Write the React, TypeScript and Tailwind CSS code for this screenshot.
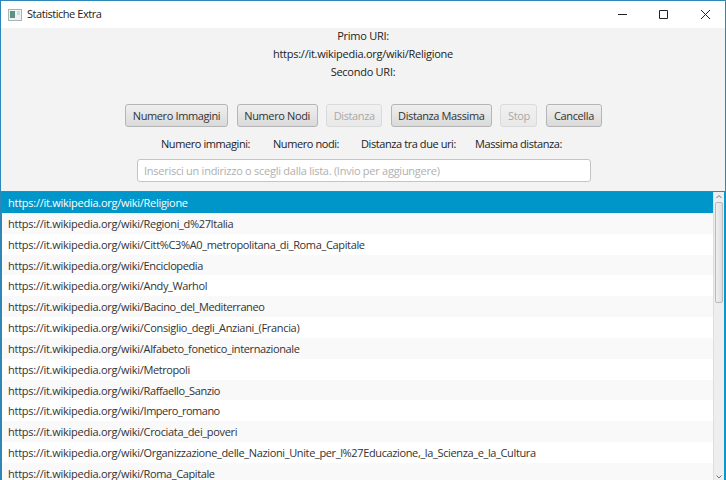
import React from "react";

const rows: [string, string][] = [
  ["Religione", "tracking-[-0.3px]"],
  ["Regioni_d%27Italia", "tracking-[-0.34px]"],
  ["Citt%C3%A0_metropolitana_di_Roma_Capitale", "tracking-[-0.35px]"],
  ["Enciclopedia", "tracking-[-0.4px]"],
  ["Andy_Warhol", "tracking-[-0.38px]"],
  ["Bacino_del_Mediterraneo", "tracking-[-0.41px]"],
  ["Consiglio_degli_Anziani_(Francia)", "tracking-[-0.32px]"],
  ["Alfabeto_fonetico_internazionale", "tracking-[-0.37px]"],
  ["Metropoli", "tracking-[-0.43px]"],
  ["Raffaello_Sanzio", "tracking-[-0.41px]"],
  ["Impero_romano", "tracking-[-0.52px]"],
  ["Crociata_dei_poveri", "tracking-[-0.33px]"],
  ["Organizzazione_delle_Nazioni_Unite_per_l%27Educazione,_la_Scienza_e_la_Cultura", "tracking-[-0.365px]"],
  ["Roma_Capitale", "tracking-[-0.39px]"],
];

function Button({ label, width, disabled }: { label: string; width: string; disabled?: boolean }) {
  return (
    <button
      disabled={disabled}
      className={`${width} h-[23px] shrink-0 whitespace-nowrap rounded-[3px] border border-[#b5b5b5] bg-linear-to-b from-[#efefef] to-[#dadada] text-center leading-[21px] text-[#333] disabled:opacity-40`}
    >
      {label}
    </button>
  );
}

export default function App() {
  return (
    <div className="flex h-[480px] w-[726px] flex-col overflow-hidden border-x border-t border-[#2d86b5] bg-[#f3f3f3] font-['Open_Sans','Noto_Sans',sans-serif] text-[11px] tracking-[-0.26px] text-[#222]">
      <header className="flex h-[27px] shrink-0 items-center bg-white pl-[7px]">
        <svg width="14" height="12" viewBox="0 0 14 12" className="mr-[5px]">
          <rect x=".5" y=".5" width="13" height="11" fill="#eef1f0" stroke="#a9b5b9" />
          <rect x="2" y="2" width="5" height="7" fill="#5b9282" />
          <rect x="9" y="2" width="3" height="4" fill="#c9e0d6" />
        </svg>
        <span className="tracking-[-0.46px]">Statistiche Extra</span>
        <svg width="95" height="11" viewBox="0 0 95 11" className="mr-[13px] ml-auto" fill="none" stroke="#222">
          <path d="M1 5.5h9M42.5 1.5h8v8h-8zM84 1l9 9M93 1l-9 9" />
        </svg>
      </header>
      <section className="flex h-[163px] shrink-0 flex-col">
        <div className="-mt-px flex flex-col items-center text-center leading-[18px]">
          <span>Primo URI:</span>
          <span>https://it.wikipedia.org/wiki/Religione</span>
          <span>Secondo URI:</span>
        </div>
        <div className="mt-[23px] flex gap-[8.6px] pl-[124px] tracking-[-0.38px]">
          <Button label="Numero Immagini" width="w-[103px]" />
          <Button label="Numero Nodi" width="w-[81px]" />
          <Button label="Distanza" width="w-[56px]" disabled />
          <Button label="Distanza Massima" width="w-[101px]" />
          <Button label="Stop" width="w-[37px]" disabled />
          <Button label="Cancella" width="w-[56px]" />
        </div>
        <div className="mt-[8px] flex pl-[160px] leading-[18px] tracking-[-0.42px] whitespace-nowrap">
          <span className="w-[112px]">Numero immagini:</span>
          <span className="w-[88px]">Numero nodi:</span>
          <span className="w-[114px]">Distanza tra due uri:</span>
          <span>Massima distanza:</span>
        </div>
        <input
          className="mt-[6px] ml-[136px] h-[23px] w-[454px] rounded-[3px] border border-[#c4c4c4] bg-white px-[6px] placeholder:text-[#b0b0b0]"
          placeholder="Inserisci un indirizzo o scegli dalla lista. (Invio per aggiungere)"
        />
      </section>
      <main className="flex h-[289px] shrink-0 overflow-hidden border-x border-t border-[#0b96d2] bg-white">
        <div className="min-w-0 flex-1">
          {rows.map(([name, tracking], i) => (
            <div
              key={name}
              className={`flex h-[20.85px] items-center pt-[1.6px] pl-[6px] whitespace-nowrap ${i === 0 ? "bg-[#0096c9] text-white" : i % 2 ? "bg-[#f9f9f9] text-[#333]" : "bg-white text-[#333]"}`}
            >
              <span>
                https://it.wikipedia.org/wiki/<span className={tracking}>{name}</span>
              </span>
            </div>
          ))}
        </div>
        <div className="flex w-[11px] flex-col items-center border-l border-[#dedede] bg-[#eee]">
          <svg width="8" height="10" viewBox="0 0 8 10" fill="none" stroke="#777"><path d="M1.5 6L4 3.5L6.5 6" /></svg>
          <div className="h-[101px] w-[8px] rounded-[2px] border border-[#b9b9b9] bg-linear-to-r from-[#f0f0f0] to-[#dedede]" />
          <svg width="8" height="10" viewBox="0 0 8 10" className="mt-auto" fill="none" stroke="#777"><path d="M1.5 5.5L4 8L6.5 5.5" /></svg>
        </div>
      </main>
    </div>
  );
}
